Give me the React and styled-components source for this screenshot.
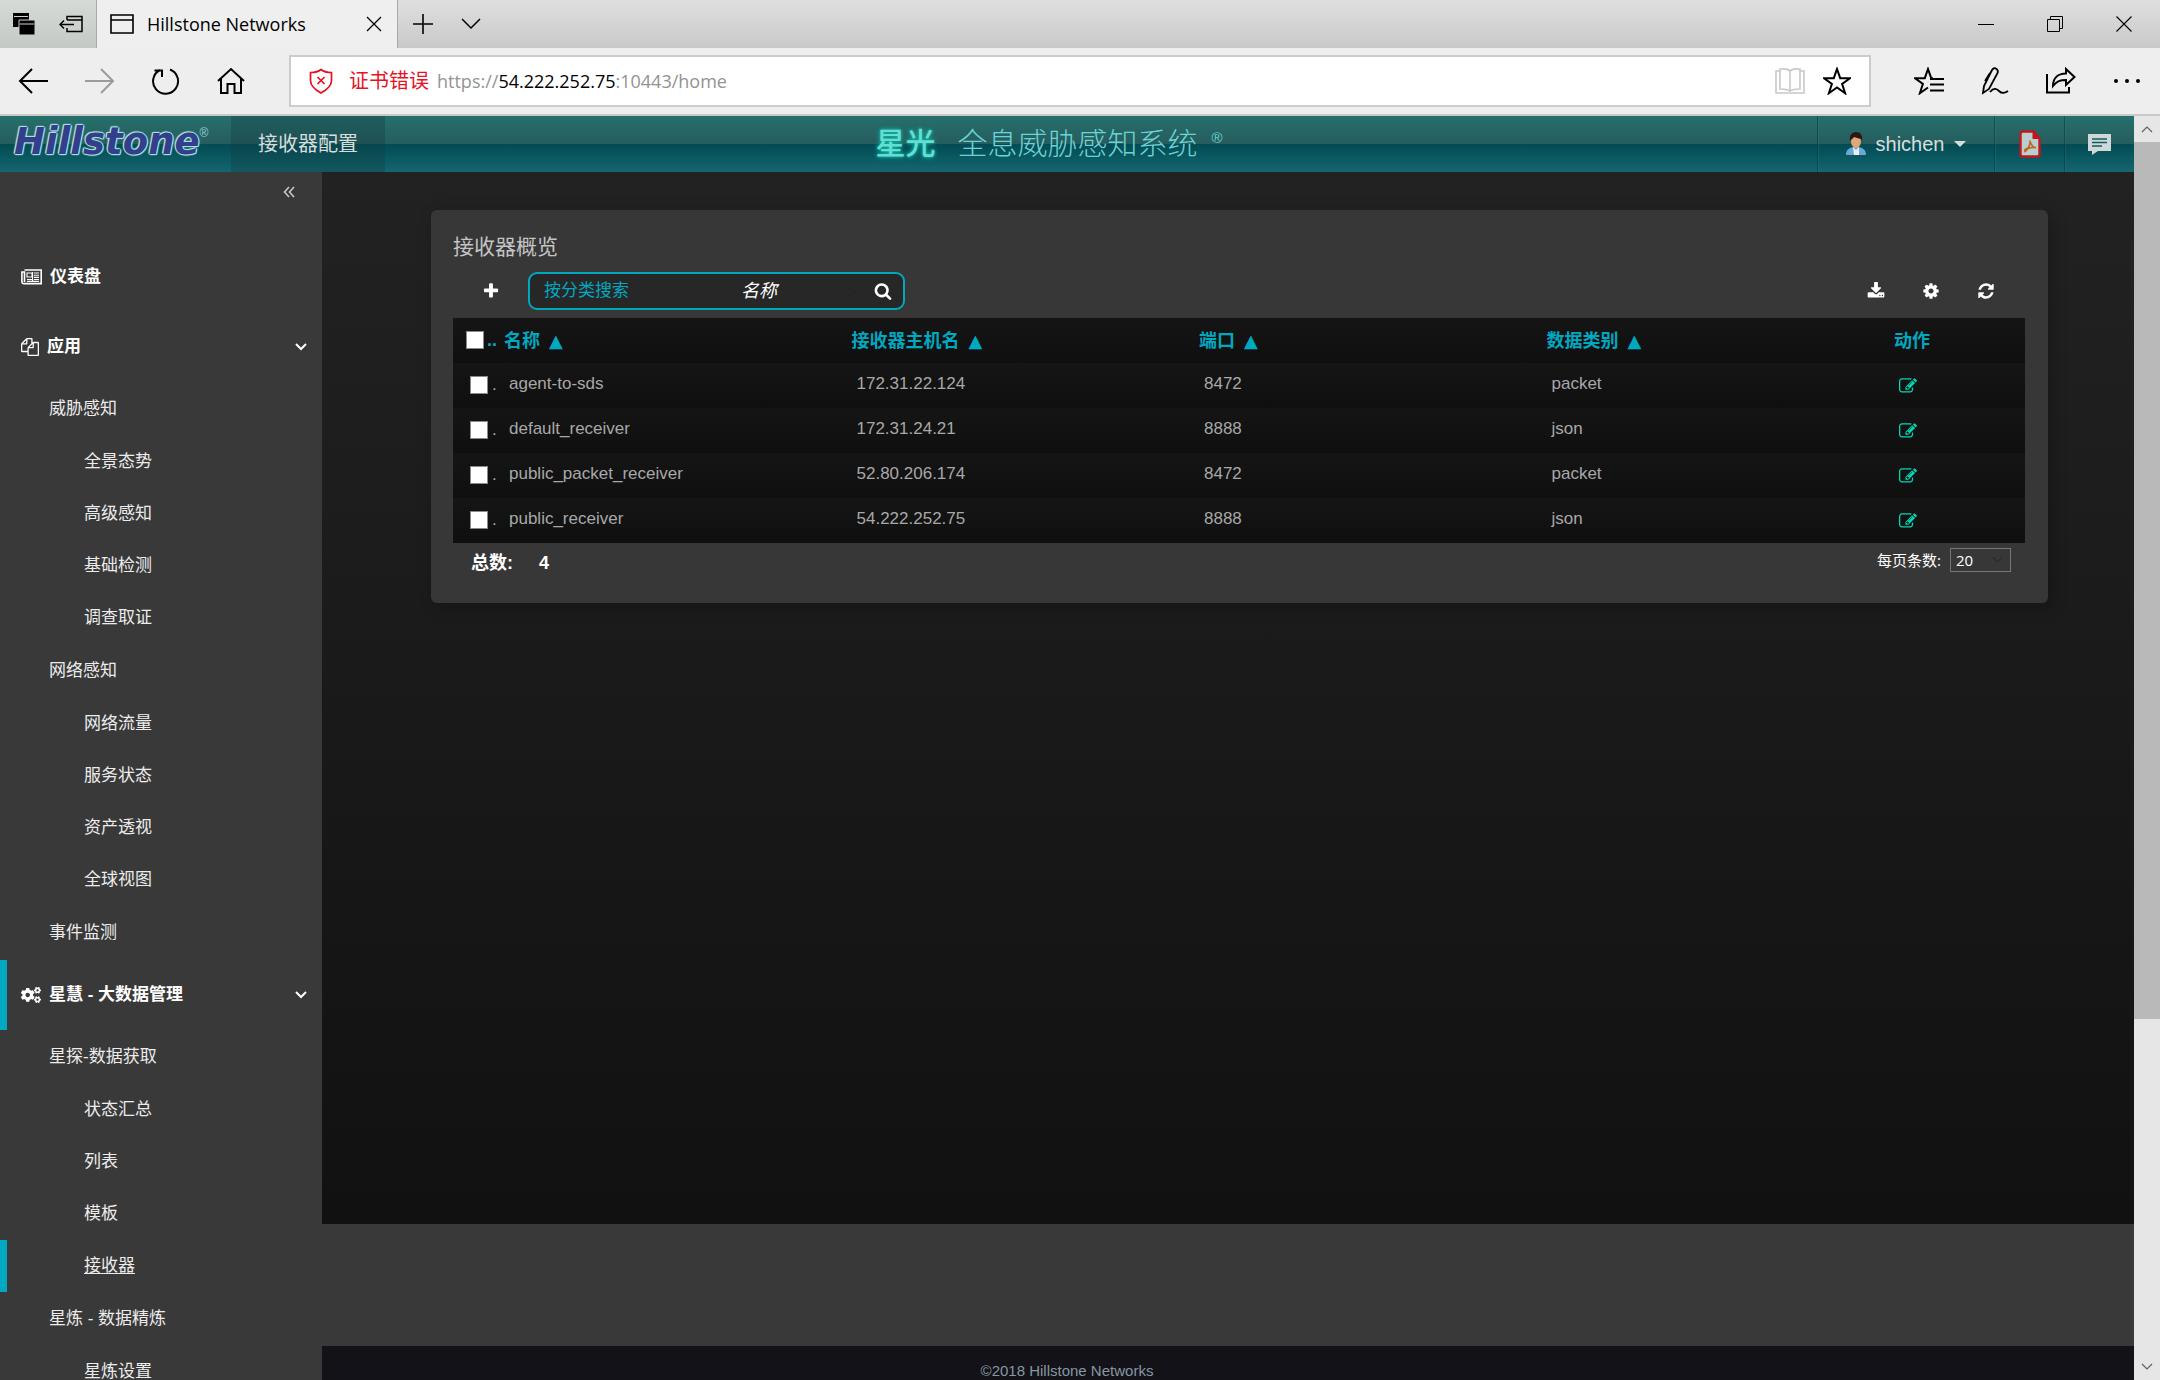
import React from "react";
import styled, { createGlobalStyle, css } from "styled-components";
import { FaCogs } from "react-icons/fa";

const teal = "#00a8c0";
const panel = "#393939";
const uiFont = `"Open Sans", "Noto Sans CJK SC", sans-serif`;
const appFont = `"Liberation Sans", "Noto Sans CJK SC", sans-serif`;

const GlobalStyle = createGlobalStyle`
  * { box-sizing: border-box; }
  body { margin: 0; background: ${panel}; font-family: ${appFont}; }
  button, input, select { font: inherit; color: inherit; }
  button { display: flex; align-items: center; justify-content: center; padding: 0; border: 0; background: none; }
  a { color: inherit; text-decoration: none; }
  ul { margin: 0; padding: 0; list-style: none; }
  svg { display: block; flex: none; }
`;

/* ---------- icons ---------- */

const Line = ({ w = 24, h = w, vb, sw = 2, children, ...rest }) => (
  <svg width={w} height={h} viewBox={vb || `0 0 ${w} ${h}`} fill="none" stroke="currentColor" strokeWidth={sw} {...rest}>
    {children}
  </svg>
);

const glyphs = {
  edit: "M888 1184l116-116-152-152-116 116v56h96v96h56zm440-720q-16-16-33 1l-350 350q-17 17-1 33t33-1l350-350q17-17 1-33zm80 594v190q0 119-84.5 203.5t-203.5 84.5h-832q-119 0-203.5-84.5t-84.5-203.5v-832q0-119 84.5-203.5t203.5-84.5h832q63 0 117 25 15 7 18 23 3 17-9 29l-49 49q-14 14-32 8-23-6-45-6h-832q-66 0-113 47t-47 113v832q0 66 47 113t113 47h832q66 0 113-47t47-113v-126q0-13 9-22l64-64q15-15 35-7t20 29zm-96-738l288 288-672 672h-288v-288zm444 132l-92 92-288-288 92-92q28-28 68-28t68 28l152 152q28 28 28 68t-28 68z",
  files: "M1696 384q40 0 68 28t28 68v1216q0 40-28 68t-68 28h-960q-40 0-68-28t-28-68v-288h-544q-40 0-68-28t-28-68v-672q0-40 20-88t48-76l408-408q28-28 76-48t88-20h416q40 0 68 28t28 68v328q68-40 128-40h416zm-544 213l-299 299h299v-299zm-640-384l-299 299h299v-299zm196 647l316-316v-416h-384v416q0 40-28 68t-68 28h-416v640h512v-256q0-40 20-88t48-76zm956 804v-1152h-384v416q0 40-28 68t-68 28h-416v640h896z",
  search: "M1216 832q0-185-131.5-316.5t-316.5-131.5-316.5 131.5-131.5 316.5 131.5 316.5 316.5 131.5 316.5-131.5 131.5-316.5zm512 832q0 52-38 90t-90 38q-54 0-90-38l-343-342q-179 124-399 124-143 0-273.5-55.5t-225-150-150-225-55.5-273.5 55.5-273.5 150-225 225-150 273.5-55.5 273.5 55.5 225 150 150 225 55.5 273.5q0 220-124 399l343 343q37 37 37 90z",
  plus: "M1600 736v192q0 40-28 68t-68 28h-416v416q0 40-28 68t-68 28h-192q-40 0-68-28t-28-68v-416h-416q-40 0-68-28t-28-68v-192q0-40 28-68t68-28h416v-416q0-40 28-68t68-28h192q40 0 68 28t28 68v416h416q40 0 68 28t28 68z",
  cog: "M1152 896q0-106-75-181t-181-75-181 75-75 181 75 181 181 75 181-75 75-181zm512-109v222q0 12-8 23t-20 13l-185 28q-19 54-39 91 35 50 107 138 10 12 10 25t-9 23q-27 37-99 108t-94 71q-12 0-26-9l-138-108q-44 23-91 38-16 136-29 186-7 28-36 28h-222q-14 0-24.5-8.5t-11.5-21.5l-28-184q-49-16-90-37l-141 107q-10 9-25 9-14 0-25-11-126-114-165-168-7-10-7-23 0-12 8-23 15-21 51-66.5t54-70.5q-27-50-41-99l-183-27q-13-2-21-12.5t-8-23.5v-222q0-12 8-23t19-13l186-28q14-46 39-92-40-57-107-138-10-12-10-24 0-10 9-23 26-36 98.5-107.5t94.5-71.5q13 0 26 10l138 107q44-23 91-38 16-136 29-186 7-28 36-28h222q14 0 24.5 8.5t11.5 21.5l28 184q49 16 90 37l142-107q9-9 24-9 13 0 25 10 129 119 165 170 7 8 7 22 0 12-8 23-15 21-51 66.5t-54 70.5q26 50 41 98l183 28q13 2 21 12.5t8 23.5z",
  refresh: "M1639 1056q0 5-1 7-64 268-268 434.5t-478 166.5q-146 0-282.5-55t-243.5-157l-129 129q-19 19-45 19t-45-19-19-45v-448q0-26 19-45t45-19h448q26 0 45 19t19 45-19 45l-137 137q71 66 161 102t187 36q134 0 250-65t186-179q11-17 53-117 8-23 30-23h192q13 0 22.5 9.5t9.5 22.5zm25-800v448q0 26-19 45t-45 19h-448q-26 0-45-19t-19-45 19-45l138-138q-148-137-349-137-134 0-250 65t-186 179q-11 17-53 117-8 23-30 23h-199q-13 0-22.5-9.5t-9.5-22.5v-7q65-268 270-434.5t480-166.5q146 0 284 55.5t245 156.5l130-129q19-19 45-19t45 19 19 45z",
  download: "M1344 1344q0-26-19-45t-45-19-45 19-19 45 19 45 45 19 45-19 19-45zm256 0q0-26-19-45t-45-19-45 19-19 45 19 45 45 19 45-19 19-45zm128-224v320q0 40-28 68t-68 28h-1472q-40 0-68-28t-28-68v-320q0-40 28-68t68-28h465l135 136q58 56 136 56t136-56l136-136h464q40 0 68 28t28 68zm-325-569q17 41-14 70l-448 448q-18 19-45 19t-45-19l-448-448q-31-29-14-70 17-39 59-39h256v-448q0-26 19-45t45-19h256q26 0 45 19t19 45v448h256q42 0 59 39z",
};

const Glyph = ({ name, size = 18 }) => (
  <svg width={size} height={size} viewBox="0 0 1792 1792" fill="currentColor">
    <path d={glyphs[name]} />
  </svg>
);

const NewspaperIcon = () => (
  <Line w={21} h={16} sw={1.6}>
    <path d="M3.5 1h16.7v13.6H2.6A1.7 1.7 0 0 1 .9 13V3h2.6v10" />
    <path d="M6 4h5v4H6zM13 4h5M13 6.2h5M13 8.4h5M6 10.5h5M13 10.5h5M6 12.4h12M11.6 3v9" strokeWidth="1.1" />
  </Line>
);
const ChevronIcon = ({ w = 12, sw = 2 }) => (
  <Line w={w} h={8} vb="0 0 12 8" sw={sw}><path d="M1 1l5 5 5-5" /></Line>
);
const UserIcon = () => (
  <svg width="20" height="24" viewBox="0 0 20 24">
    <path d="M0 23c0-6 4-7 7-8h6c3 1 7 2 7 8z" fill="#6ba7d8" />
    <path d="M7 15l3 3 3-3v8H8z" fill="#e9f1f8" />
    <ellipse cx="10" cy="9.500" rx="5" ry="6.500" fill="#e0a878" />
    <path d="M4 9C3 2 7 0 10.500 0S17 3 16 9l-1-2c-3-1-5-1-7-2-1 2-3 2-4 4z" fill="#2d1713" />
  </svg>
);
const PdfIcon = () => (
  <svg width="22" height="28" viewBox="0 0 22 28">
    <path d="M4 1.500h10.500l6 7V24a2.500 2.500 0 0 1-2.500 2.500H4A2.500 2.500 0 0 1 1.500 24V4A2.500 2.500 0 0 1 4 1.500z" fill="#b9cfcf" stroke="#c4161c" strokeWidth="2.400" />
    <path d="M13.500 1l7.500 8h-7.500z" fill="#c4161c" />
    <path d="M10.500 10.500c1.500 4 3 7 6.500 7.500M11.300 12c-1 5-3 8.500-6 10M5 20.500c3-2.500 7-3.500 12-3" fill="none" stroke="#c0651d" strokeWidth="1.600" />
  </svg>
);
const ChatIcon = () => (
  <svg width="23" height="21" viewBox="0 0 23 21">
    <path d="M0 0h23v17H10l-6 4v-4H0z" fill="#cfd8d8" />
    <path d="M4 5h15M4 8.500h15M4 12h10" stroke="#145a60" strokeWidth="1.500" />
  </svg>
);

/* ---------- browser chrome ---------- */

const Window = styled.div`
  display: flex;
  flex-direction: column;
  height: 100vh;
  overflow: hidden;
`;
const TabStrip = styled.div`
  display: flex;
  flex: none;
  height: 48px;
  color: #000;
  font-family: ${uiFont};
  background: linear-gradient(#dfdfdf, #c9c9c9);
`;
const TabTools = styled.div`
  display: flex;
  align-items: center;
  gap: 24px;
  width: 97px;
  padding-left: 13px;
  background: linear-gradient(#d6dad7, #c4c9c6);
  border-right: 1px solid #a9a9a9;
`;
const Tab = styled.div`
  display: flex;
  align-items: center;
  width: 301px;
  padding: 0 14px 0 13px;
  background: #efefef;
  border-right: 1px solid #a9a9a9;
  font-size: 18px;
  line-height: 24px;
`;
const TabTitle = styled.span`
  flex: 1;
  padding-left: 13px;
`;
const TabActions = styled.div`
  display: flex;
  align-items: center;
  gap: 28px;
  padding-left: 15px;
`;
const WindowButtons = styled.div`
  display: flex;
  align-items: center;
  gap: 53px;
  margin-left: auto;
  padding-right: 28px;
`;
const NavBar = styled.div`
  display: flex;
  flex: none;
  align-items: center;
  height: 68px;
  padding: 0 19px 0 18px;
  color: #000;
  background: #eee;
  border-bottom: 2px solid #c9c9c9;
  font-family: ${uiFont};
`;
const NavButtons = styled.div`
  display: flex;
  align-items: center;
  gap: 37px;
  width: 271px;
`;
const ToolButtons = styled.div`
  display: flex;
  align-items: center;
  gap: 37px;
  padding-left: 43px;
`;
const ChromeButton = styled.button`
  color: ${(p) => p.$color || "#000"};
`;
const AddressBar = styled.div`
  display: flex;
  flex: 1;
  align-items: center;
  height: 52px;
  padding: 0 18px;
  background: #fff;
  border: 2px solid #ccc;
  font-size: 18px;
  line-height: 28px;
`;
const CertWarning = styled.span`
  padding: 0 8px 0 16px;
  color: #e81123;
  font-size: 20px;
`;
const Url = styled.span`
  flex: 1;
  color: #939393;
`;
const Host = styled.span`
  color: #000;
`;
const AddressTools = styled.div`
  display: flex;
  align-items: center;
  gap: 18px;
`;

/* ---------- application shell ---------- */

const Viewport = styled.div`
  display: flex;
  flex: 1;
  min-height: 0;
`;
const AppFrame = styled.div`
  display: flex;
  flex: 1;
  flex-direction: column;
  min-width: 0;
`;
const Scrollbar = styled.div`
  display: flex;
  flex-direction: column;
  width: 26px;
  background: #e6e6e6;
  color: #606060;
`;
const ScrollButton = styled.button`
  height: 26px;
  svg { transform: ${(p) => (p.$up ? "rotate(180deg)" : "none")}; }
`;
const ScrollTrack = styled.div`
  flex: ${(p) => p.$grow};
  background: ${(p) => (p.$thumb ? "#b9b9b9" : "transparent")};
`;

const Header = styled.header`
  display: grid;
  flex: none;
  grid-template-columns: 1fr auto 1fr;
  height: 56px;
  color: #d5dede;
  background: linear-gradient(#25706c 0, #265c5d 50%, #024b53 50%, #14666f 100%);
  font-size: 20px;
  line-height: 28px;
`;
const HeaderLeft = styled.div`
  display: flex;
`;
const Brand = styled.a`
  display: flex;
  align-items: flex-start;
  width: 231px;
  padding: 5px 0 0 14px;
`;
const BrandName = styled.span`
  color: #343f8c;
  font: italic bold 37px/42px "DejaVu Sans", sans-serif;
  text-shadow: 1px 0 1px #a9e0e2, -1px 0 1px #a9e0e2, 0 1px 1px #a9e0e2, 0 -1px 1px #a9e0e2,
    1px 1px 1px #a9e0e2, -1px -1px 1px #a9e0e2;
`;
const BrandMark = styled.span`
  color: #9ccbdc;
  font-size: 12px;
  line-height: 24px;
`;
const HeaderTab = styled.a`
  display: flex;
  align-items: center;
  padding: 0 27px;
  background: rgba(20, 60, 65, 0.35);
`;
const Title = styled.h1`
  display: flex;
  align-items: center;
  margin: 0;
  padding-right: 36px;
  color: #6ad3d6;
  font-size: 30px;
  font-weight: 300;
  line-height: 40px;
`;
const TitleMark = styled.strong`
  padding-right: 22px;
  color: #62dfd2;
  font-weight: 500;
  text-shadow: 0 0 5px #12b5a5, 0 0 3px #12b5a5;
`;
const Registered = styled.span`
  align-self: flex-start;
  padding-left: 14px;
  font-size: 15px;
  line-height: 44px;
`;
const HeaderRight = styled.div`
  display: flex;
  justify-content: flex-end;
`;
const HeaderButton = styled.button`
  gap: 10px;
  width: ${(p) => (p.$wide ? 177 : 70)}px;
  border-left: 1px solid rgba(0, 50, 55, 0.5);
  box-shadow: inset 1px 0 rgba(60, 130, 130, 0.3);
`;
const Caret = styled.span`
  width: 0;
  border: 6px solid transparent;
  border-top-color: #d5dede;
  border-bottom: 0;
`;

const Body = styled.div`
  display: flex;
  flex: 1;
  min-height: 0;
`;

/* ---------- sidebar ---------- */

const Sidebar = styled.nav`
  flex: none;
  width: 322px;
  overflow: hidden;
  color: #ececec;
  background: ${panel};
  font-size: 17px;
  line-height: 24px;
`;
const SidebarTop = styled.div`
  display: flex;
  align-items: center;
  justify-content: flex-end;
  height: 40px;
  margin-bottom: 30px;
  padding-right: 27px;
`;
const markable = css`
  display: flex;
  align-items: center;
  border-left: 7px solid ${(p) => (p.$active ? teal : "transparent")};
`;
const SectionLink = styled.a`
  ${markable}
  gap: 8px;
  height: 70px;
  padding: 0 15px 0 14px;
  color: #fff;
  font-weight: bold;
`;
const SectionName = styled.span`
  flex: 1;
`;
const ItemLink = styled.a`
  ${markable}
  height: ${(p) => (p.$level === 1 ? 54 : 52)}px;
  padding-left: ${(p) => (p.$level === 1 ? 42 : 77)}px;
  text-decoration: ${(p) => (p.$active ? "underline" : "none")};
  text-underline-offset: 2px;
`;

/* ---------- receiver panel ---------- */

const Main = styled.div`
  display: flex;
  flex: 1;
  flex-direction: column;
  min-width: 0;
`;
const Content = styled.main`
  flex: 1;
  padding: 38px 86px 0 109px;
  background: linear-gradient(#222, #111);
`;
const Footer = styled.footer`
  margin-top: 122px;
  padding: 16px 322px 0 0;
  color: #8797a0;
  background: #131218;
  font-size: 15px;
  line-height: 18px;
  text-align: center;
`;
const Card = styled.section`
  padding: 23px 23px 22px 22px;
  background: #373737;
  border-radius: 6px;
  box-shadow: 4px 4px 16px rgba(0, 0, 0, 0.25);
`;
const CardTitle = styled.h2`
  margin: 0 0 11px;
  color: #c4c4c4;
  font-size: 21px;
  font-weight: normal;
  line-height: 28px;
`;
const Toolbar = styled.div`
  display: flex;
  align-items: center;
  gap: 19px;
  margin-bottom: 8px;
  padding: 0 21px 0 20px;
`;
const IconButton = styled.button`
  width: 36px;
  height: 32px;
  color: #fff;
`;
const SearchBox = styled.form`
  display: flex;
  align-items: center;
  width: 377px;
  height: 38px;
  margin-right: auto;
  padding: 0 5px 0 14px;
  color: #fff;
  background: #272727;
  border: 2px solid ${teal};
  border-radius: 9px;
  font-size: 17px;
  line-height: 24px;
`;
const SearchInput = styled.input`
  flex: 1;
  min-width: 0;
  padding: 0;
  color: ${teal};
  background: none;
  border: 0;
  outline: 0;
  &::placeholder { color: ${teal}; opacity: 1; }
`;
const SelectWrap = styled.span`
  display: grid;
  align-items: center;
  width: ${(p) => p.$width}px;
  > * { grid-area: 1 / 1; }
  > svg { justify-self: end; margin-right: 7px; color: #222; pointer-events: none; }
`;
const FieldSelect = styled.select`
  appearance: none;
  width: 100%;
  padding: 0;
  background: none;
  border: 0;
  font-size: 18px;
  font-style: italic;
  line-height: 24px;
`;
const SearchButton = styled.button`
  width: 30px;
  height: 30px;
`;

const Table = styled.table`
  width: 100%;
  border-collapse: collapse;
  table-layout: fixed;
  color: #a8a8a8;
  font-size: 17px;
  line-height: 24px;
`;
const Col = styled.col`
  width: ${(p) => (p.$width ? `${p.$width}px` : "auto")};
`;
const Row = styled.tr`
  height: 45px;
  background: linear-gradient(#151515, #0f0f0f);
`;
const HeadCell = styled.th`
  padding: 0 6px;
  color: ${teal};
  font-size: 18px;
  text-align: left;
`;
const Cell = styled.td`
  padding: 0 11px 3px;
  vertical-align: middle;
`;
const ActionCell = styled(Cell)`
  padding-bottom: 0;
`;
const PickHead = styled(HeadCell)`
  padding: 0 0 2px 13px;
`;
const PickCell = styled(Cell)`
  padding: 0 0 2px 17px;
`;
const Pick = styled.span`
  display: flex;
  align-items: flex-end;
  gap: ${(p) => p.$gap}px;
  height: 18px;
  line-height: 18px;
`;
const Check = styled.input`
  appearance: none;
  flex: none;
  width: 18px;
  height: 18px;
  margin: 0;
  background: #fff;
  border: 1px solid #8a8a8a;
`;
const SortArrow = styled.span`
  padding-left: 9px;
  font-family: "DejaVu Sans", sans-serif;
  font-weight: normal;
`;
const EditButton = styled.button`
  color: #00d9b5;
`;

const CardFooter = styled.div`
  display: flex;
  align-items: flex-start;
  justify-content: space-between;
  height: 38px;
  padding: 5px 14px 0 18px;
  color: #fff;
`;
const Total = styled.strong`
  display: flex;
  gap: 26px;
  font-size: 18px;
  line-height: 30px;
`;
const PageSize = styled.div`
  display: flex;
  align-items: center;
  gap: 9px;
  font-family: ${uiFont};
  font-size: 15px;
  line-height: 20px;
`;
const SizeSelect = styled.select`
  appearance: none;
  width: 100%;
  height: 24px;
  padding: 0 5px;
  background: none;
  border: 1px solid #767676;
`;

/* ---------- data ---------- */

const sections = [
  { name: "仪表盘", icon: <NewspaperIcon /> },
  {
    name: "应用",
    icon: <Glyph name="files" />,
    items: [
      [1, "威胁感知"], [2, "全景态势"], [2, "高级感知"], [2, "基础检测"], [2, "调查取证"],
      [1, "网络感知"], [2, "网络流量"], [2, "服务状态"], [2, "资产透视"], [2, "全球视图"],
      [1, "事件监测"],
    ],
  },
  {
    name: "星慧 - 大数据管理",
    icon: <FaCogs size={20} />,
    active: true,
    items: [
      [1, "星探-数据获取"], [2, "状态汇总"], [2, "列表"], [2, "模板"], [2, "接收器", true],
      [1, "星炼 - 数据精炼"], [2, "星炼设置"],
    ],
  },
];

const columns = ["名称", "接收器主机名", "端口", "数据类别"];
const receivers = [
  ["agent-to-sds", "172.31.22.124", "8472", "packet"],
  ["default_receiver", "172.31.24.21", "8888", "json"],
  ["public_packet_receiver", "52.80.206.174", "8472", "packet"],
  ["public_receiver", "54.222.252.75", "8888", "json"],
];

/* ---------- parts ---------- */

const starPath = "M14 2l3.200 9.200H27l-7.900 5.700 3 9.300L14 20.500l-8.100 5.700 3-9.300L1 11.200h9.800z";

function BrowserChrome() {
  return (
    <>
      <TabStrip>
        <TabTools>
          <ChromeButton aria-label="Tabs you have set aside">
            <svg width="22" height="22" viewBox="0 0 22 22">
              <path d="M0 0h16v14H0z" /><path d="M6 7h16v15H6z" stroke="#cfd3d0" /><path d="M1 3.500h14M7 11h14" stroke="#cfd3d0" />
            </svg>
          </ChromeButton>
          <ChromeButton aria-label="Set these tabs aside">
            <Line w={24} h={18} sw={1.5}><path d="M8 5V1.500h15v15H8V13M8 5h15M1 9.500h14M5 5.500l-4 4 4 4" /></Line>
          </ChromeButton>
        </TabTools>
        <Tab>
          <Line w={24} h={20} sw={1.6}><path d="M1 1h22v18H1zM1 6h22" /></Line>
          <TabTitle>Hillstone Networks</TabTitle>
          <ChromeButton aria-label="Close tab">
            <Line w={18} h={18} sw={1.3}><path d="M2 2l14 14M16 2L2 16" /></Line>
          </ChromeButton>
        </Tab>
        <TabActions>
          <ChromeButton aria-label="New tab"><Line w={20} sw={1.600}><path d="M10 0v20M0 10h20" /></Line></ChromeButton>
          <ChromeButton aria-label="Tab previews"><Line w={20} h={12} sw={1.500}><path d="M1 1l9 9 9-9" /></Line></ChromeButton>
        </TabActions>
        <WindowButtons>
          <ChromeButton aria-label="Minimise"><Line w={16} h={16} sw={1}><path d="M0 8.500h16" /></Line></ChromeButton>
          <ChromeButton aria-label="Restore"><Line w={16} h={16} sw={1}><path d="M.5 3.500h12v12H.5zM3.500 3.500v-3h12v12h-3" /></Line></ChromeButton>
          <ChromeButton aria-label="Close"><Line w={16} h={16} sw={1.100}><path d="M.5.5l15 15M15.500.5l-15 15" /></Line></ChromeButton>
        </WindowButtons>
      </TabStrip>
      <NavBar>
        <NavButtons>
          <ChromeButton aria-label="Back"><Line w={30} h={26}><path d="M14 1L2 13l12 12M2 13h28" /></Line></ChromeButton>
          <ChromeButton aria-label="Forward" $color="#9b9b9b"><Line w={30} h={26}><path d="M16 1l12 12-12 12M28 13H0" /></Line></ChromeButton>
          <ChromeButton aria-label="Refresh"><Line w={28} h={28}><path d="M18 2.500A12.500 12.500 0 1 1 8 3M2.500 3.500H10V10" /></Line></ChromeButton>
          <ChromeButton aria-label="Home"><Line w={28} h={28}><path d="M1 14L14 2l13 12M4 12v14h6.500v-9h7v9H24V12" /></Line></ChromeButton>
        </NavButtons>
        <AddressBar>
          <ChromeButton aria-label="Certificate error" $color="#e81123">
            <Line w={24} h={26}><path d="M12 1.500c3 2.500 7 3 10.500 3v8c0 6-5 9.500-10.500 12.500C6.500 22 1.500 18.500 1.500 12.500v-8c3.500 0 7.500-.5 10.500-3zM8.500 9l7 7M15.500 9l-7 7" strokeWidth="1.700" /></Line>
          </ChromeButton>
          <CertWarning>证书错误</CertWarning>
          <Url>https://<Host>54.222.252.75</Host>:10443/home</Url>
          <AddressTools>
            <ChromeButton aria-label="Reading view" $color="#c8c8c8">
              <Line w={30} h={28} sw={1.600}><path d="M15 4v20M15 4c-3-3-7-2-10-2v20c4 0 7 0 10 2 3-2 6-2 10-2V2c-3 0-7-1-10 2zM5 4H1v22h28V4h-4" /></Line>
            </ChromeButton>
            <ChromeButton aria-label="Add to favourites"><Line w={28} h={28}><path d={starPath} /></Line></ChromeButton>
          </AddressTools>
        </AddressBar>
        <ToolButtons>
          <ChromeButton aria-label="Hub">
            <Line w={30} h={28}><path d="M19 11.200h-1.800L14 2l-3.200 9.200H1l7.900 5.700-3 9.300L14 20.500M16 12h14M16 17.500h14M16 23.500h14" /></Line>
          </ChromeButton>
          <ChromeButton aria-label="Make a web note">
            <Line w={28} h={28}><path d="M2 26l1-7L11 3q2-3 4.500-1t.5 5L8 22zM9 6l-5 8M9 25c4-5 7-3 9-1s5 3 9 0" strokeWidth="1.800" /></Line>
          </ChromeButton>
          <ChromeButton aria-label="Share">
            <Line w={30} h={28}><path d="M1 7v18.500h22V20M7 19c0-8 5-12.500 13-12.500V2l8.500 8L20 18v-5c-6 0-9 1-13 6z" /></Line>
          </ChromeButton>
          <ChromeButton aria-label="More">
            <svg width="28" height="6" viewBox="0 0 28 6"><circle cx="3" cy="3" r="2" /><circle cx="14" cy="3" r="2" /><circle cx="25" cy="3" r="2" /></svg>
          </ChromeButton>
        </ToolButtons>
      </NavBar>
    </>
  );
}

function AppHeader() {
  return (
    <Header>
      <HeaderLeft>
        <Brand href="#home"><BrandName>Hillstone</BrandName><BrandMark>®</BrandMark></Brand>
        <HeaderTab href="#receivers">接收器配置</HeaderTab>
      </HeaderLeft>
      <Title><TitleMark>星光</TitleMark>全息威胁感知系统<Registered>®</Registered></Title>
      <HeaderRight>
        <HeaderButton $wide><UserIcon />shichen<Caret /></HeaderButton>
        <HeaderButton aria-label="PDF"><PdfIcon /></HeaderButton>
        <HeaderButton aria-label="Messages"><ChatIcon /></HeaderButton>
      </HeaderRight>
    </Header>
  );
}

function SideNav() {
  return (
    <Sidebar>
      <SidebarTop>
        <ChromeButton aria-label="Collapse" $color="#c8c8c8">
          <Line w={12} h={12} sw={1.600}><path d="M6 1L1.500 6 6 11M11 1L6.500 6l4.500 5" /></Line>
        </ChromeButton>
      </SidebarTop>
      <ul>
        {sections.map(({ name, icon, items, active }) => (
          <li key={name}>
            <SectionLink href="#" $active={active}>
              {icon}<SectionName>{name}</SectionName>{items && <ChevronIcon />}
            </SectionLink>
            {items && (
              <ul>
                {items.map(([level, label, current]) => (
                  <li key={label}><ItemLink href="#" $level={level} $active={current}>{label}</ItemLink></li>
                ))}
              </ul>
            )}
          </li>
        ))}
      </ul>
    </Sidebar>
  );
}

function ReceiverCard() {
  return (
    <Card>
      <CardTitle>接收器概览</CardTitle>
      <Toolbar>
        <IconButton aria-label="新增"><Glyph name="plus" /></IconButton>
        <SearchBox onSubmit={(e) => e.preventDefault()}>
          <SearchInput placeholder="按分类搜索" aria-label="按分类搜索" />
          <SelectWrap $width={127}>
            <FieldSelect aria-label="分类"><option>名称</option></FieldSelect>
            <ChevronIcon w={13} sw={1} />
          </SelectWrap>
          <SearchButton aria-label="搜索"><Glyph name="search" /></SearchButton>
        </SearchBox>
        <IconButton aria-label="下载"><Glyph name="download" /></IconButton>
        <IconButton aria-label="设置"><Glyph name="cog" /></IconButton>
        <IconButton aria-label="刷新"><Glyph name="refresh" /></IconButton>
      </Toolbar>
      <Table>
        <colgroup><Col $width={45} /><Col /><Col /><Col /><Col /><Col $width={137} /></colgroup>
        <thead>
          <Row>
            <PickHead><Pick $gap={3}><Check type="checkbox" aria-label="全选" />..</Pick></PickHead>
            {columns.map((c) => <HeadCell key={c}>{c}<SortArrow>▲</SortArrow></HeadCell>)}
            <HeadCell>动作</HeadCell>
          </Row>
        </thead>
        <tbody>
          {receivers.map((r) => (
            <Row key={r[0]}>
              <PickCell><Pick $gap={4}><Check type="checkbox" aria-label={r[0]} />.</Pick></PickCell>
              {r.map((v, i) => <Cell key={i}>{v}</Cell>)}
              <ActionCell><EditButton aria-label="编辑"><Glyph name="edit" /></EditButton></ActionCell>
            </Row>
          ))}
        </tbody>
      </Table>
      <CardFooter>
        <Total><span>总数:</span><span>4</span></Total>
        <PageSize>
          <label htmlFor="page-size">每页条数:</label>
          <SelectWrap $width={61}>
            <SizeSelect id="page-size"><option>20</option></SizeSelect>
            <ChevronIcon w={13} sw={1} />
          </SelectWrap>
        </PageSize>
      </CardFooter>
    </Card>
  );
}

export default function App() {
  return (
    <Window>
      <GlobalStyle />
      <BrowserChrome />
      <Viewport>
        <AppFrame>
          <AppHeader />
          <Body>
            <SideNav />
            <Main>
              <Content><ReceiverCard /></Content>
              <Footer>©2018 Hillstone Networks</Footer>
            </Main>
          </Body>
        </AppFrame>
        <Scrollbar>
          <ScrollButton $up aria-label="Scroll up"><ChevronIcon w={16} sw={1.200} /></ScrollButton>
          <ScrollTrack $thumb $grow={877} />
          <ScrollTrack $grow={335} />
          <ScrollButton aria-label="Scroll down"><ChevronIcon w={16} sw={1.200} /></ScrollButton>
        </Scrollbar>
      </Viewport>
    </Window>
  );
}
